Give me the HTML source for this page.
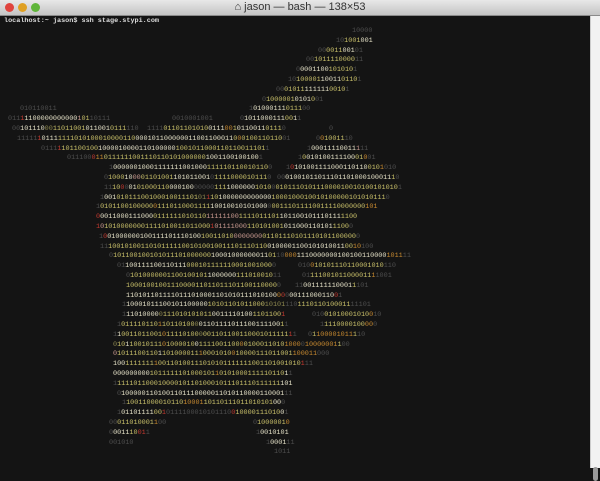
<!DOCTYPE html>
<html><head><meta charset="utf-8"><style>
html,body{margin:0;padding:0;width:600px;height:468px;overflow:hidden;background:#141414}
#tb{position:absolute;left:0;top:0;width:600px;height:15px;background:linear-gradient(#e8e8e8,#c4c4c4);border-bottom:1px solid #8a8a8a}
.dot{position:absolute;top:3px;width:9px;height:9px;border-radius:50%}
#title{position:absolute;top:1px;left:0;width:600px;text-align:center;font:11px "Liberation Sans",sans-serif;color:#333}
#sb{position:absolute;right:0;top:16px;width:9px;height:452px;background:#f2f2f2;border-left:1px solid #ccc}
#th{position:absolute;right:2px;top:451px;width:5px;height:14px;border-radius:3px;background:#9a9a9a}
.r{position:absolute;font:6.8px/9.8px "Liberation Mono",monospace;color:#c9c06a;white-space:pre}
.g{color:#4e4e4e}.w{color:#e6e2c8}.d{color:#8f8a50}.x{color:#c23a30}.p{color:#c99a90}.o{color:#c88a30}
#cmd{position:absolute;left:4px;top:17px;font:bold 6.8px/9.8px "Liberation Mono",monospace;color:#dcdcdc;white-space:pre}
</style></head><body>
<div id="tb">
<div class="dot" style="left:5px;background:#e0443e"></div>
<div class="dot" style="left:18px;background:#dfa023"></div>
<div class="dot" style="left:31px;background:#5fb53a"></div>
<div id="title">⌂ jason — bash — 138×53</div>
</div>
<div id="sb"><div id="th"></div></div>
<div id="cmd">localhost:~ jason$ ssh stage.stypi.com</div>

<div class="r g" style="top:27px;left:352px">10000</div>
<div class="r" style="top:37px;left:336px"><span class="g">10</span>1001<span class="w">001</span></div>
<div class="r" style="top:46.5px;left:318px"><span class="g">00</span>0011<span class="w">001</span><span class="g">01</span></div>
<div class="r" style="top:56.3px;left:306px"><span class="g">00</span>1011110000<span class="g">11</span></div>
<div class="r" style="top:66px;left:296px"><span class="g">0</span><span class="w">0001100</span>101010<span class="g">1</span></div>
<div class="r" style="top:76px;left:288px"><span class="g">10</span>100001<span class="w">10011</span>0110<span class="g">1</span></div>
<div class="r" style="top:85.7px;left:276px"><span class="g">00</span>01011<span class="w">111111</span>0010<span class="g">1</span></div>
<div class="r" style="top:95.5px;left:262px"><span class="g">0</span>1000001<span class="w">0101</span>0<span class="g">01</span></div>
<div class="r g" style="top:105.3px;left:20px">010110011</div>
<div class="r" style="top:105.3px;left:249px"><span class="g">1</span><span class="w">01000111</span>0111<span class="g">00</span></div>
<div class="r" style="top:115px;left:8px"><span class="g">011</span><span class="x">1</span><span class="w">1100000000000</span><span class="p">1</span>01<span class="g">10111</span></div>
<div class="r g" style="top:115px;left:172px">0010001001</div>
<div class="r" style="top:115px;left:240px"><span class="g">0</span><span class="w">1011000111</span>00<span class="w">1</span><span class="g">1</span></div>
<div class="r" style="top:125px;left:12px"><span class="g">00</span><span class="w">101110</span><span class="d">00</span>11011001<span class="w">011001</span>0111<span class="g">110</span></div>
<div class="r" style="top:125px;left:147px"><span class="g">1111</span>01101101010<span class="w">0111</span><span class="o">00</span>1<span class="w">0110011</span>0111<span class="g">0</span></div>
<div class="r g" style="top:125px;left:329px">0</div>
<div class="r" style="top:134.7px;left:17px"><span class="g">11111</span><span class="x">1</span><span class="w">0111</span>1111010100010000110<span class="w">000101100000011001100011</span>0<span class="o">0</span>0100110110<span class="g">01</span></div>
<div class="r" style="top:134.7px;left:316px"><span class="g">0</span><span class="o">0</span>10011<span class="g">10</span></div>
<div class="r" style="top:144.5px;left:41px"><span class="g">0111</span><span class="x">1</span>101100100<span class="w">1000010000110100000</span>1001011000110110011101<span class="g">1</span></div>
<div class="r" style="top:144.5px;left:307px"><span class="g">1</span><span class="w">00011110011</span><span class="p">1</span><span class="g">11</span></div>
<div class="r" style="top:154.3px;left:67px"><span class="g">011100</span><span class="x">0</span><span class="o">11</span>0111111001110110101000000<span class="w">1001100100100</span><span class="g">1</span></div>
<div class="r" style="top:154.3px;left:298px"><span class="g">1</span>0<span class="w">010100111100</span>01<span class="o">0</span><span class="g">01</span></div>
<div class="r" style="top:164px;left:109px"><span class="g">1</span><span class="w">00000010001111111001000</span>111110110010110<span class="g">0</span></div>
<div class="r" style="top:164px;left:286px"><span class="g">1</span><span class="x">0</span><span class="w">101001111000110110</span>010<span class="o">1</span><span class="g">010</span></div>
<div class="r" style="top:174px;left:104px"><span class="g">0</span>1000<span class="w">10</span><span class="p">00</span>01101001<span class="w">101011001</span><span class="g">0</span>1111000010111<span class="g">0</span></div>
<div class="r" style="top:174px;left:277px"><span class="g">00</span><span class="w">01001011011101101000100011</span>1<span class="g">0</span></div>
<div class="r" style="top:183.7px;left:104px"><span class="g">11</span>10<span class="x">0</span><span class="g">0</span><span class="w">01</span>01000110<span class="w">000100</span><span class="g">00000</span>111<span class="w">1000000</span>1010<span class="g">0</span>010111010111000010010100101010<span class="g">1</span></div>
<div class="r" style="top:193.5px;left:100px"><span class="g">1</span><span class="w">001</span>01011100100010011101<span class="d">01</span><span class="x">1</span>10<span class="w">1000000000000</span>1000100010010100000101010111<span class="g">0</span></div>
<div class="r" style="top:203.3px;left:96px"><span class="g">1</span>0101100100000<span class="o">0</span>1110110001111<span class="w">10010010101000</span><span class="g">0</span>00111011110011110000000<span class="o">101</span></div>
<div class="r" style="top:213px;left:96px"><span class="x">0</span><span class="w">0011000111000</span>0111111010110<span class="p">11111100</span>1111011101<span class="w">101100101110111</span>1100</div>
<div class="r" style="top:223px;left:96px"><span class="x">1</span><span class="p">0</span>10100000001111010011011000<span class="x">1</span><span class="p">01111000</span>110101001<span class="w">011000110101</span>1100<span class="g">0</span></div>
<div class="r" style="top:232.7px;left:99px"><span class="g">1</span><span class="x">0</span><span class="w">01000000100111101110100</span>10011010<span class="p">0000000</span>01101110101110101100000<span class="g">0</span></div>
<div class="r" style="top:242.5px;left:100px"><span class="g">11</span>100101001101011111001010010011101110110<span class="w">0100001100101010011</span>00<span class="o">10</span><span class="g">100</span></div>
<div class="r" style="top:252.3px;left:109px"><span class="g">0</span>101100100101011101000000<span class="w">10001000000011</span>01<span class="g">10</span><span class="o">000</span><span class="w">1110000000100100110000</span><span class="o">1011</span><span class="g">11</span></div>
<div class="r" style="top:262px;left:117px"><span class="g">01</span><span class="w">100111100110111</span>000101111110001001000<span class="g">0</span></div>
<div class="r" style="top:262px;left:298px"><span class="g">010</span><span class="o">0</span>10101110110001010<span class="g">110</span></div>
<div class="r" style="top:272px;left:126px"><span class="g">0</span>1010000001100100101<span class="w">1000000</span>111010010<span class="g">11</span></div>
<div class="r" style="top:272px;left:302px"><span class="g">01</span>111001011000011<span class="o">1</span><span class="g">1001</span></div>
<div class="r" style="top:281.7px;left:126px">1000100100111000011011011101100110000<span class="g">0</span></div>
<div class="r" style="top:281.7px;left:295px"><span class="g">11</span><span class="w">001111110001</span>1<span class="g">101</span></div>
<div class="r" style="top:291.5px;left:126px"><span class="w">1101011011110111010001101010111010100</span><span class="o">0</span><span class="x">0</span><span class="g">0</span><span class="w">00111000110</span><span class="x">0</span><span class="g">1</span></div>
<div class="r" style="top:301.3px;left:122px"><span class="g">1</span><span class="w">10001011100101100000</span>10101101011000<span class="d">10101</span><span class="g">110</span>1110110100011<span class="g">11101</span></div>
<div class="r" style="top:311px;left:122px"><span class="g">1</span><span class="w">11010000</span><span class="d">0</span>111010101011<span class="w">0011110100</span>1101100<span class="x">1</span></div>
<div class="r" style="top:311px;left:312px"><span class="g">010</span>01010001010<span class="o">0</span><span class="g">10</span></div>
<div class="r" style="top:321px;left:117px"><span class="g">1</span>011110110<span class="o">1</span>10110100<span class="d">0</span><span class="w">01101111011100111100</span>1<span class="g">1</span></div>
<div class="r" style="top:321px;left:320px"><span class="g">1</span>1110000100<span class="o">00</span><span class="g">0</span></div>
<div class="r" style="top:330.7px;left:113px"><span class="g">1</span><span class="w">1</span>0011011001<span class="o">0</span>11110100<span class="d">0</span>001101100110001011111<span class="x">1</span><span class="g">1</span></div>
<div class="r" style="top:330.7px;left:308px"><span class="g">0</span>1<span class="o">100001011</span>1<span class="g">10</span></div>
<div class="r" style="top:340.5px;left:113px"><span class="d">0</span>10<span class="w">1</span>10010111<span class="o">0</span>1000010<span class="w">0</span>1111001100<span class="o">0</span>0100011010<span class="o">1000</span><span class="g">0</span><span class="o">10000001</span>1<span class="g">00</span></div>
<div class="r" style="top:350.3px;left:113px"><span class="p">0</span>1011100110<span class="w">1</span>101000011<span class="o">1</span>0001010<span class="o">0</span>10000111011001<span class="o">100011</span><span class="g">000</span></div>
<div class="r" style="top:360px;left:113px"><span class="w">100</span>1111111<span class="o">1</span>00110100111010101111111001101001010<span class="x">1</span><span class="g">11</span></div>
<div class="r" style="top:370px;left:113px"><span class="w">000000000</span>1011111101000101<span class="o">1</span>0101000111110110<span class="w">1</span><span class="g">1</span></div>
<div class="r" style="top:379.7px;left:113px"><span class="g">1</span>1111011000100001011010001011101110111111<span class="w">101</span></div>
<div class="r" style="top:389.5px;left:117px"><span class="g">0</span><span class="w">1000001101001101110000011010110000110001</span><span class="g">11</span></div>
<div class="r" style="top:399.3px;left:122px"><span class="g">1</span>10011000010110<span class="o">10001</span>10110111011010101<span class="w">00</span><span class="g">0</span></div>
<div class="r" style="top:409px;left:117px"><span class="g">1</span><span class="w">01101111</span>00<span class="x">1</span><span class="g">0111100010101110</span><span class="x">0</span>10000111010<span class="w">0</span><span class="g">1</span></div>
<div class="r" style="top:419px;left:109px"><span class="g">00</span>011010001<span class="o">1</span><span class="g">00</span></div>
<div class="r" style="top:419px;left:253px"><span class="g">0</span>1000001<span class="o">0</span></div>
<div class="r" style="top:428.7px;left:109px"><span class="g">0</span><span class="w">0011</span>10<span class="x">01</span><span class="g">1</span></div>
<div class="r" style="top:428.7px;left:256px"><span class="g">1</span><span class="w">0010101</span></div>
<div class="r g" style="top:438.5px;left:109px">001010</div>
<div class="r" style="top:438.5px;left:266px"><span class="g">1</span><span class="w">0001</span><span class="g">11</span></div>
<div class="r g" style="top:448.3px;left:274px">1011</div>
</body></html>
